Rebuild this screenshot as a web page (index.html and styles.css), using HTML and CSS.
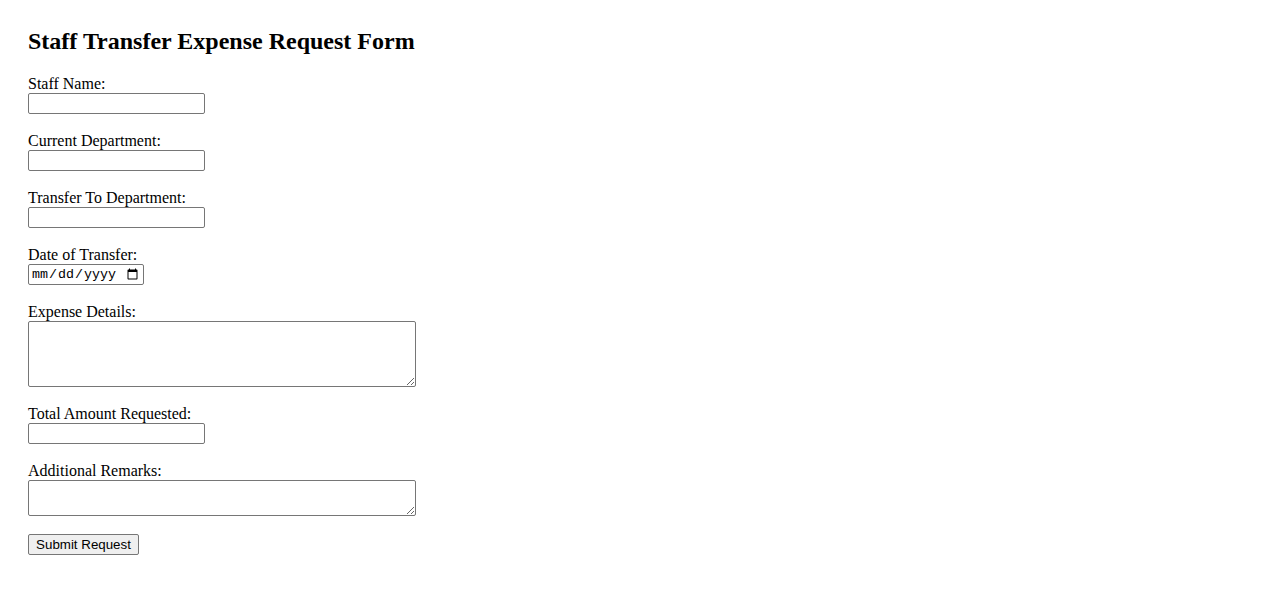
FILE: index.html
```html
<!DOCTYPE html>
<html lang="en">
<head>
<meta charset="utf-8">
<title>Staff Transfer Expense Request Form</title>
<link rel="stylesheet" href="styles.css">
</head>
<body>
<main class="page">
  <h2 class="title">Staff Transfer Expense Request Form</h2>
  <form class="form">
    <div class="field">
      <label class="label" for="name">Staff Name:</label>
      <input class="text-input" type="text" id="name">
    </div>
    <div class="field">
      <label class="label" for="cur">Current Department:</label>
      <input class="text-input" type="text" id="cur">
    </div>
    <div class="field">
      <label class="label" for="to">Transfer To Department:</label>
      <input class="text-input" type="text" id="to">
    </div>
    <div class="field">
      <label class="label" for="date">Date of Transfer:</label>
      <input class="date-input" type="date" id="date">
    </div>
    <div class="field">
      <label class="label" for="details">Expense Details:</label>
      <textarea class="area area-lg" id="details"></textarea>
    </div>
    <div class="field">
      <label class="label" for="amt">Total Amount Requested:</label>
      <input class="text-input" type="text" id="amt">
    </div>
    <div class="field field-last">
      <label class="label" for="rem">Additional Remarks:</label>
      <textarea class="area area-sm" id="rem"></textarea>
    </div>
    <button class="submit" type="submit">Submit Request</button>
  </form>
</main>
</body>
</html>
```
FILE: styles.css
```css
html, body {
  margin: 0;
  padding: 0;
  background: #fff;
}
body {
  font-family: "Liberation Serif", "Times New Roman", serif;
  font-size: 16px;
  color: #000;
}
.page {
  padding: 28px;
}
.title {
  margin: 0 0 22px;
  font-size: 24px;
  font-weight: bold;
  line-height: 26px;
}
.form {
  margin: 0;
}
.field {
  margin-bottom: 19px;
}
.field-last {
  margin-bottom: 18px;
}
.label {
  display: block;
  line-height: 15px;
  padding-bottom: 2px;
}
.text-input,
.date-input,
.area {
  display: block;
  box-sizing: border-box;
  margin: 0;
  border: 1px solid #767676;
  border-radius: 2px;
  background: #fff;
}
.text-input {
  width: 177px;
  height: 21px;
  padding: 1px 2px;
  font-family: "Liberation Sans", Arial, sans-serif;
  font-size: 13.33px;
}
.date-input {
  width: 116px;
  height: 21px;
  padding: 1px 2px;
  font-family: "Liberation Mono", "Courier New", monospace;
  font-size: 13.33px;
}
.area {
  width: 388px;
  padding: 2px;
  resize: both;
  font-family: "Liberation Mono", "Courier New", monospace;
  font-size: 13.33px;
}
.area-lg {
  height: 66px;
}
.area-sm {
  height: 36px;
}
.submit {
  display: block;
  box-sizing: border-box;
  margin: 0;
  width: 111px;
  height: 21px;
  padding: 1px 6px;
  font-family: "Liberation Sans", Arial, sans-serif;
  font-size: 13.33px;
  color: #000;
  background: #efefef;
  border: 1px solid #767676;
  border-radius: 2px;
}
```
